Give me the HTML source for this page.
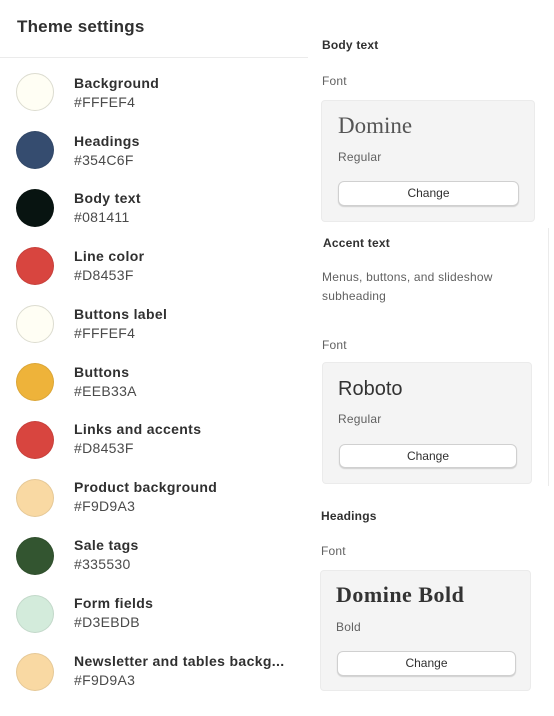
<!DOCTYPE html>
<html><head><meta charset="utf-8"><style>
*{margin:0;padding:0;box-sizing:border-box}
body{width:554px;height:716px;background:#fff;font-family:"Liberation Sans",sans-serif;color:#303030;position:relative;overflow:hidden}
.a{position:absolute}
h1{position:absolute;left:17px;top:17px;font-size:17px;font-weight:bold;color:#303030;letter-spacing:0.2px}
.hr{position:absolute;left:0;top:57px;width:308px;height:1px;background:#ebebeb}
.sw{position:absolute;left:16px;width:38px;height:38px;border-radius:50%;border:1px solid rgba(0,0,0,.08)}
.nm{position:absolute;left:74px;font-size:14px;font-weight:bold;color:#303030;letter-spacing:0.35px}
.hx{position:absolute;left:74px;font-size:14px;color:#4a4a4a;letter-spacing:0.3px}
.sm{font-size:12px;position:absolute;letter-spacing:0.2px}
.b{font-weight:bold;color:#303030}
.g{color:#616161}
.card{position:absolute;background:#f4f4f4;border:1px solid #ebebeb;border-radius:4px}
.btn{position:absolute;background:#fff;border:1px solid #d0d0d0;border-radius:6px;box-shadow:0 1px 1px rgba(0,0,0,.15);font-size:12px;text-align:center;color:#303030}
</style></head><body>
<h1>Theme settings</h1>
<div class="hr"></div>

<div class="sw" style="top:73px;background:#FFFEF4;border:1px solid #dcdcd0"></div>
<div class="nm" style="top:75px">Background</div><div class="hx" style="top:94px">#FFFEF4</div>
<div class="sw" style="top:131px;background:#354C6F"></div>
<div class="nm" style="top:133px">Headings</div><div class="hx" style="top:152px">#354C6F</div>
<div class="sw" style="top:189px;background:#081411"></div>
<div class="nm" style="top:190px">Body text</div><div class="hx" style="top:209px">#081411</div>
<div class="sw" style="top:247px;background:#D8453F"></div>
<div class="nm" style="top:248px">Line color</div><div class="hx" style="top:267px">#D8453F</div>
<div class="sw" style="top:305px;background:#FFFEF4;border:1px solid #dcdcd0"></div>
<div class="nm" style="top:306px">Buttons label</div><div class="hx" style="top:325px">#FFFEF4</div>
<div class="sw" style="top:363px;background:#EEB33A"></div>
<div class="nm" style="top:364px">Buttons</div><div class="hx" style="top:383px">#EEB33A</div>
<div class="sw" style="top:421px;background:#D8453F"></div>
<div class="nm" style="top:421px">Links and accents</div><div class="hx" style="top:440px">#D8453F</div>
<div class="sw" style="top:479px;background:#F9D9A3"></div>
<div class="nm" style="top:479px">Product background</div><div class="hx" style="top:498px">#F9D9A3</div>
<div class="sw" style="top:537px;background:#335530"></div>
<div class="nm" style="top:537px">Sale tags</div><div class="hx" style="top:556px">#335530</div>
<div class="sw" style="top:595px;background:#D3EBDB"></div>
<div class="nm" style="top:595px">Form fields</div><div class="hx" style="top:614px">#D3EBDB</div>
<div class="sw" style="top:653px;background:#F9D9A3"></div>
<div class="nm" style="top:653px">Newsletter and tables backg...</div><div class="hx" style="top:672px">#F9D9A3</div>

<div class="sm b" style="left:322px;top:38px">Body text</div>
<div class="sm g" style="left:322px;top:74px">Font</div>
<div class="card" style="left:321px;top:100px;width:214px;height:122px"></div>
<div class="a" style="left:338px;top:113px;font-family:'Liberation Serif',serif;font-size:23px;color:#555">Domine</div>
<div class="sm g" style="left:338px;top:150px">Regular</div>
<div class="btn" style="left:338px;top:181px;width:181px;height:25px;line-height:23px">Change</div>

<div class="sm b" style="left:323px;top:236px">Accent text</div>
<div class="sm g" style="left:322px;top:268px;line-height:19px;width:200px">Menus, buttons, and slideshow subheading</div>
<div class="a" style="left:548px;top:228px;width:1px;height:258px;background:#ebebeb"></div>
<div class="sm g" style="left:322px;top:338px">Font</div>
<div class="card" style="left:322px;top:362px;width:210px;height:122px"></div>
<div class="a" style="left:338px;top:378px;font-size:20px;color:#333">Roboto</div>
<div class="sm g" style="left:338px;top:412px">Regular</div>
<div class="btn" style="left:339px;top:444px;width:178px;height:24px;line-height:22px">Change</div>

<div class="sm b" style="left:321px;top:509px">Headings</div>
<div class="sm g" style="left:321px;top:544px">Font</div>
<div class="card" style="left:320px;top:570px;width:211px;height:121px"></div>
<div class="a" style="left:336px;top:582px;font-family:'Liberation Serif',serif;font-size:22px;font-weight:bold;color:#333;letter-spacing:0.5px">Domine Bold</div>
<div class="sm g" style="left:336px;top:620px">Bold</div>
<div class="btn" style="left:337px;top:651px;width:179px;height:25px;line-height:23px">Change</div>
</body></html>
